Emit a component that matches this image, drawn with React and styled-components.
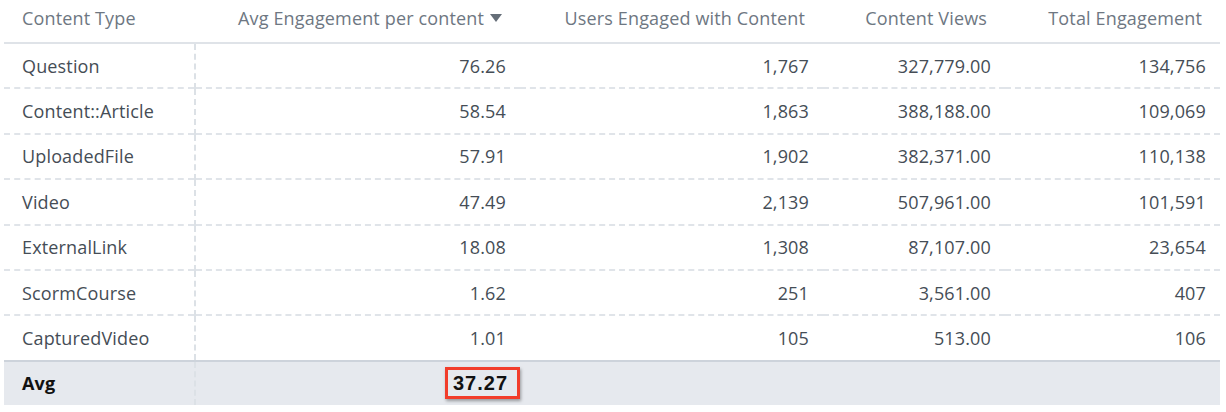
import React from "react";
import styled, { createGlobalStyle } from "styled-components";

const Global = createGlobalStyle`
  html, body { margin: 0; padding: 0; background: #fff; }
  body { font-family: "Open Sans", Lato, sans-serif; }
`;

const Wrap = styled.div`
  padding: 0 6px 0 4px;
  width: 1226px;
  box-sizing: border-box;
`;

const Table = styled.table`
  width: 100%;
  border-collapse: collapse;
  table-layout: fixed;
  font-size: 18px;
  letter-spacing: 0.15px;
`;

const Th = styled.th`
  height: 43px;
  box-sizing: border-box;
  padding: 0 ${(p) => (p.$first ? "0 0 18px" : "18px 0 0")};
  padding-bottom: 6px;
  text-align: ${(p) => (p.$first ? "left" : "right")};
  font-weight: 400;
  color: #6e7782;
  border-bottom: 2px solid #dfe3e8;
  white-space: nowrap;
  vertical-align: middle;
`;

const Caret = styled.span`
  display: inline-block;
  width: 0;
  height: 0;
  margin-left: 6px;
  border-left: 6px solid transparent;
  border-right: 6px solid transparent;
  border-top: 8px solid #656e78;
  vertical-align: 3px;
`;

const Tr = styled.tr`
  background: ${(p) => (p.$total ? "#e6e9ee" : "#fff")};
`;

const Td = styled.td`
  height: ${(p) => (p.$total ? "44px" : "45.4px")};
  box-sizing: border-box;
  padding: 0 ${(p) => (p.$first ? "0 0 18px" : "14px 0 0")};
  text-align: ${(p) => (p.$first ? "left" : "right")};
  color: ${(p) => (p.$total ? "#111" : "#454d56")};
  font-weight: ${(p) => (p.$total ? 700 : 400)};
  border-top: ${(p) =>
    p.$top ? "none" : p.$total ? "2px solid #cdd3db" : "2px dashed #e0e4e9"};
  border-right: ${(p) => (p.$first ? "2px dashed #dce1e6" : "none")};
  white-space: nowrap;
  vertical-align: middle;
`;

const Highlight = styled.span`
  display: inline-block;
  box-sizing: border-box;
  width: 75px;
  height: 32px;
  margin-right: -14px;
  padding: 3px 0 0 5px;
  text-align: left;
  border: 3px solid #f23d2b;
  box-shadow: 1px 2px 3px rgba(0, 0, 0, 0.35);
  font-family: "Liberation Sans", Arial, sans-serif;
  font-weight: 700;
  font-size: 20px;
  letter-spacing: 1px;
  line-height: 21px;
  color: #111;
  vertical-align: middle;
`;

const rows = [
  ["Question", "76.26", "1,767", "327,779.00", "134,756"],
  ["Content::Article", "58.54", "1,863", "388,188.00", "109,069"],
  ["UploadedFile", "57.91", "1,902", "382,371.00", "110,138"],
  ["Video", "47.49", "2,139", "507,961.00", "101,591"],
  ["ExternalLink", "18.08", "1,308", "87,107.00", "23,654"],
  ["ScormCourse", "1.62", "251", "3,561.00", "407"],
  ["CapturedVideo", "1.01", "105", "513.00", "106"],
];

export default function App() {
  return (
    <Wrap>
      <Global />
      <Table>
        <colgroup>
          <col style={{ width: 191 }} />
          <col style={{ width: 325 }} />
          <col style={{ width: 303 }} />
          <col style={{ width: 182 }} />
          <col />
        </colgroup>
        <thead>
          <tr>
            <Th $first>Content Type</Th>
            <Th>
              Avg Engagement per content<Caret />
            </Th>
            <Th>Users Engaged with Content</Th>
            <Th>Content Views</Th>
            <Th>Total Engagement</Th>
          </tr>
        </thead>
        <tbody>
          {rows.map((r, i) => (
            <Tr key={r[0]}>
              <Td $first $top={i === 0}>{r[0]}</Td>
              {r.slice(1).map((v, j) => (
                <Td key={j} $top={i === 0}>{v}</Td>
              ))}
            </Tr>
          ))}
          <Tr $total>
            <Td $first $total>Avg</Td>
            <Td $total>
              <Highlight>37.27</Highlight>
            </Td>
            <Td $total />
            <Td $total />
            <Td $total />
          </Tr>
        </tbody>
      </Table>
    </Wrap>
  );
}
